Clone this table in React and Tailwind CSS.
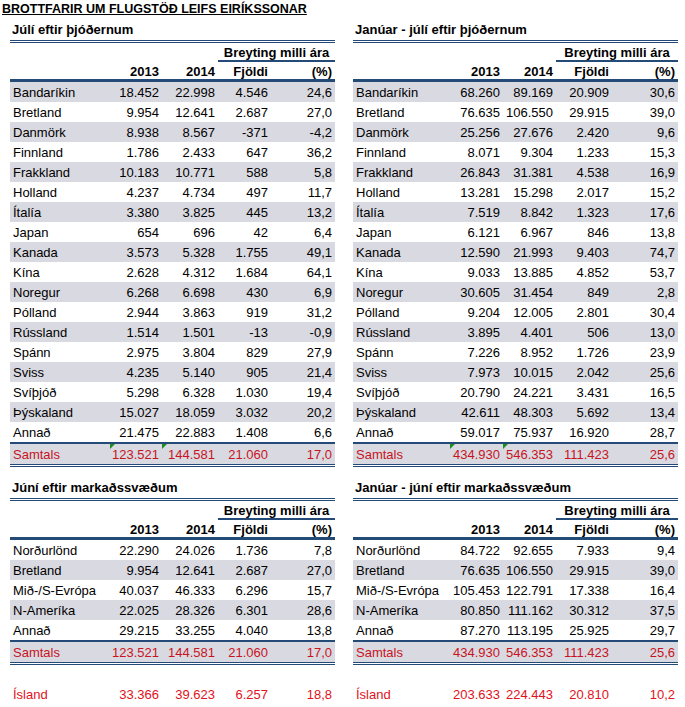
import React from "react";

const julyNat = [
  ["Bandaríkin", "18.452", "22.998", "4.546", "24,6"],
  ["Bretland", "9.954", "12.641", "2.687", "27,0"],
  ["Danmörk", "8.938", "8.567", "-371", "-4,2"],
  ["Finnland", "1.786", "2.433", "647", "36,2"],
  ["Frakkland", "10.183", "10.771", "588", "5,8"],
  ["Holland", "4.237", "4.734", "497", "11,7"],
  ["Ítalía", "3.380", "3.825", "445", "13,2"],
  ["Japan", "654", "696", "42", "6,4"],
  ["Kanada", "3.573", "5.328", "1.755", "49,1"],
  ["Kína", "2.628", "4.312", "1.684", "64,1"],
  ["Noregur", "6.268", "6.698", "430", "6,9"],
  ["Pólland", "2.944", "3.863", "919", "31,2"],
  ["Rússland", "1.514", "1.501", "-13", "-0,9"],
  ["Spánn", "2.975", "3.804", "829", "27,9"],
  ["Sviss", "4.235", "5.140", "905", "21,4"],
  ["Svíþjóð", "5.298", "6.328", "1.030", "19,4"],
  ["Þýskaland", "15.027", "18.059", "3.032", "20,2"],
  ["Annað", "21.475", "22.883", "1.408", "6,6"],
];

const ytdNat = [
  ["Bandaríkin", "68.260", "89.169", "20.909", "30,6"],
  ["Bretland", "76.635", "106.550", "29.915", "39,0"],
  ["Danmörk", "25.256", "27.676", "2.420", "9,6"],
  ["Finnland", "8.071", "9.304", "1.233", "15,3"],
  ["Frakkland", "26.843", "31.381", "4.538", "16,9"],
  ["Holland", "13.281", "15.298", "2.017", "15,2"],
  ["Ítalía", "7.519", "8.842", "1.323", "17,6"],
  ["Japan", "6.121", "6.967", "846", "13,8"],
  ["Kanada", "12.590", "21.993", "9.403", "74,7"],
  ["Kína", "9.033", "13.885", "4.852", "53,7"],
  ["Noregur", "30.605", "31.454", "849", "2,8"],
  ["Pólland", "9.204", "12.005", "2.801", "30,4"],
  ["Rússland", "3.895", "4.401", "506", "13,0"],
  ["Spánn", "7.226", "8.952", "1.726", "23,9"],
  ["Sviss", "7.973", "10.015", "2.042", "25,6"],
  ["Svíþjóð", "20.790", "24.221", "3.431", "16,5"],
  ["Þýskaland", "42.611", "48.303", "5.692", "13,4"],
  ["Annað", "59.017", "75.937", "16.920", "28,7"],
];

const juneMkt = [
  ["Norðurlönd", "22.290", "24.026", "1.736", "7,8"],
  ["Bretland", "9.954", "12.641", "2.687", "27,0"],
  ["Mið-/S-Evrópa", "40.037", "46.333", "6.296", "15,7"],
  ["N-Ameríka", "22.025", "28.326", "6.301", "28,6"],
  ["Annað", "29.215", "33.255", "4.040", "13,8"],
];

const ytdMkt = [
  ["Norðurlönd", "84.722", "92.655", "7.933", "9,4"],
  ["Bretland", "76.635", "106.550", "29.915", "39,0"],
  ["Mið-/S-Evrópa", "105.453", "122.791", "17.338", "16,4"],
  ["N-Ameríka", "80.850", "111.162", "30.312", "37,5"],
  ["Annað", "87.270", "113.195", "25.925", "29,7"],
];

const LEFT = "grid grid-cols-[100px_52px_56px_53px_64px]";
const RIGHT = "grid grid-cols-[97px_53px_53px_56px_66px]";

// little green error marker excel puts in the corner
const Flag = () => (
  <span className="absolute top-0 left-0 w-0 h-0 border-t-[5px] border-t-[#1e8c1e] border-r-[5px] border-r-transparent" />
);

const Row = ({ cols, r, shaded, red, flags, className = "" }) => (
  <div className={`${cols} h-[20px] leading-[22px] ${shaded ? "bg-[#d9d9e1]" : ""} ${red ? "text-[#c8141e]" : ""} ${className}`}>
    <div className="pl-[3px] whitespace-nowrap">{r[0]}</div>
    {r.slice(1).map((v, i) => (
      <div key={i} className="relative text-right pr-[3px] whitespace-nowrap">
        {flags && i < 2 && <Flag />}
        {v}
      </div>
    ))}
  </div>
);

const Table = ({ title, cols, rows, total, shadeOdd, island }) => (
  <div>
    <div className="h-[20px] leading-[19px] pl-[2px] font-bold whitespace-nowrap">{title}</div>
    <div className="border-b-[3px] border-double border-[#244a78]" />
    <div className={`${cols} h-[17px] leading-[20px] font-bold`}>
      <div className="col-span-3" />
      <div className="col-span-2 text-center">Breyting milli ára</div>
    </div>
    <div className={cols}>
      <div className="col-span-3" />
      <div className="col-span-2 border-b-2 border-[#244a78]" />
    </div>
    <div className={`${cols} h-[20px] leading-[20px] font-bold border-b-[3px] border-[#244a78]`}>
      <div />
      <div className="text-right pr-[3px]">2013</div>
      <div className="text-right pr-[3px]">2014</div>
      <div className="text-right pr-[3px]">Fjöldi</div>
      <div className="text-right pr-[3px]">(%)</div>
    </div>
    {rows.map((r, i) => (
      <Row key={r[0]} cols={cols} r={r} shaded={shadeOdd ? i % 2 === 1 : i % 2 === 0} />
    ))}
    <div className="border-t-2 border-[#244a78]">
      <Row cols={cols} r={total} shaded red flags={!island} />
    </div>
    <div className="border-b-[3px] border-double border-[#244a78]" />
    {island && (
      <div className="mt-[19px]">
        <Row cols={cols} r={island} red className="text-[#e0121c]" />
      </div>
    )}
  </div>
);

export default function App() {
  return (
    <div className="w-[685px] h-[707px] bg-white text-black text-[13px] font-['Liberation_Sans',Arial,sans-serif]">
      <div className="h-[20px] leading-[18px] pl-[2px] font-bold underline text-[12.5px]">
        BROTTFARIR UM FLUGSTÖÐ LEIFS EIRÍKSSONAR
      </div>
      <div className="ml-[10px] grid grid-cols-[325px_325px] gap-x-[18px] gap-y-[11px]">
        <Table title="Júlí eftir þjóðernum" cols={LEFT} rows={julyNat}
          total={["Samtals", "123.521", "144.581", "21.060", "17,0"]} />
        <Table title="Janúar - júlí eftir þjóðernum" cols={RIGHT} rows={ytdNat}
          total={["Samtals", "434.930", "546.353", "111.423", "25,6"]} />
        <Table title="Júní eftir markaðssvæðum" cols={LEFT} rows={juneMkt} shadeOdd
          total={["Samtals", "123.521", "144.581", "21.060", "17,0"]}
          island={["Ísland", "33.366", "39.623", "6.257", "18,8"]} />
        <Table title="Janúar - júní eftir markaðssvæðum" cols={RIGHT} rows={ytdMkt} shadeOdd
          total={["Samtals", "434.930", "546.353", "111.423", "25,6"]}
          island={["Ísland", "203.633", "224.443", "20.810", "10,2"]} />
      </div>
    </div>
  );
}
